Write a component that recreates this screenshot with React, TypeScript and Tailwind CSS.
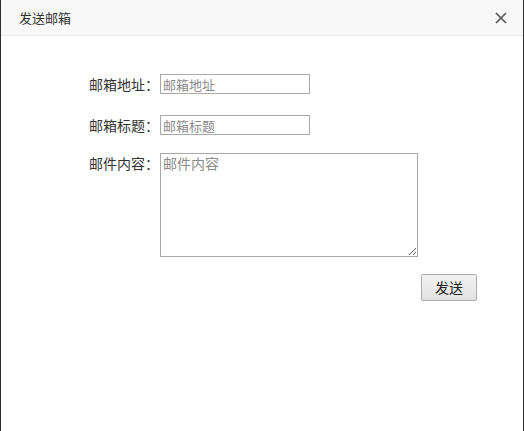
import React from 'react';

const font = { fontFamily: '"Noto Sans CJK SC", "Noto Sans", sans-serif' };

const App: React.FC = () => {
  return (
    <div
      className="w-[524px] h-[431px] bg-white border-l border-r border-[#2e2e2e] flex flex-col text-[#333]"
      style={font}
    >
      {/* header */}
      <div className="h-[36px] shrink-0 bg-[#f8f8f8] border-b border-[#e8e8e8] flex items-center justify-between pl-[18px] pr-[16px]">
        <span className="text-[13px] leading-none">发送邮箱</span>
        <svg width="12" height="12" viewBox="0 0 12 12" className="text-[#555]">
          <path d="M1 1L11 11M11 1L1 11" stroke="currentColor" strokeWidth="1.6" />
        </svg>
      </div>

      {/* form */}
      <div className="flex flex-col pl-[88px] pt-[38px]">
        <div className="flex items-center">
          <label className="w-[71px] text-[14px] leading-[20px]">邮箱地址：</label>
          <input
            type="text"
            placeholder="邮箱地址"
            className="w-[150px] h-[20px] border border-[#a9a9a9] px-[2px] text-[13px] placeholder:text-[#8a8a8a] outline-none"
          />
        </div>
        <div className="flex items-center mt-[21px]">
          <label className="w-[71px] text-[14px] leading-[20px]">邮箱标题：</label>
          <input
            type="text"
            placeholder="邮箱标题"
            className="w-[150px] h-[20px] border border-[#a9a9a9] px-[2px] text-[13px] placeholder:text-[#8a8a8a] outline-none"
          />
        </div>
        <div className="flex items-start mt-[18px]">
          <label className="w-[71px] text-[14px] leading-[20px]">邮件内容：</label>
          <textarea
            placeholder="邮件内容"
            className="w-[258px] h-[104px] border border-[#a9a9a9] px-[2px] py-0 text-[14px] leading-[18px] placeholder:text-[#8a8a8a] outline-none"
          />
        </div>
        <div className="flex mt-[17px]">
          <button className="ml-[332px] w-[56px] h-[27px] rounded-[2px] border border-[#acacac] bg-gradient-to-b from-[#f2f2f2] to-[#e2e2e2] text-[14px] text-[#222]">
            发送
          </button>
        </div>
      </div>
    </div>
  );
};

export default App;
